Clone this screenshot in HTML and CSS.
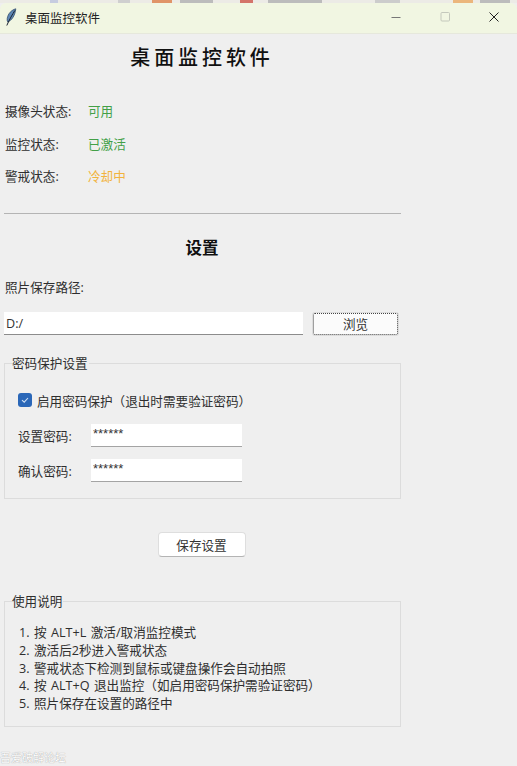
FILE: index.html
```html
<!DOCTYPE html>
<html lang="zh-CN">
<head>
    <meta charset="UTF-8">
    <title>桌面监控软件</title>
    <link rel="stylesheet" href="styles.css">
</head>
<body>
    <!-- Desktop sliver above the window -->
    <div class="desk-strip"></div>

    <div class="window">
        <!-- Title Bar -->
        <div class="titlebar">
            <svg class="feather" width="12" height="19" viewBox="0 0 12 19">
                <path d="M10.8 0.8C6.5 2 3 5.5 2.2 10.5C2 12 2.2 13.2 2.8 14C6.5 12.5 10 8 10.8 0.8Z" fill="#5d86b5" stroke="#26415f" stroke-width="0.7"/>
                <path d="M9.8 2.5C7.5 6.5 4.5 11 1.8 17.5" fill="none" stroke="#1c2430" stroke-width="1"/>
            </svg>
            <span class="titlebar-text">桌面监控软件</span>
            <div class="win-controls">
                <svg width="12" height="12" viewBox="0 0 12 12"><path d="M1.5 6.5H10.5" stroke="#777" stroke-width="1"/></svg>
                <svg width="12" height="12" viewBox="0 0 12 12"><rect x="2" y="1.5" width="8.5" height="8.5" rx="1" fill="none" stroke="#c4c8bc"/></svg>
                <svg width="12" height="12" viewBox="0 0 12 12"><path d="M1.5 1.5L10.5 10.5M10.5 1.5L1.5 10.5" stroke="#222" stroke-width="1"/></svg>
            </div>
        </div>

        <!-- Main Content -->
        <div class="content">
            <h1 class="app-title">桌面监控软件</h1>

            <div class="status-row"><span class="status-label">摄像头状态:</span><span class="green">可用</span></div>
            <div class="status-row"><span class="status-label">监控状态:</span><span class="green">已激活</span></div>
            <div class="status-row"><span class="status-label">警戒状态:</span><span class="orange">冷却中</span></div>

            <hr class="divider">

            <h2 class="section-title">设置</h2>

            <div class="path-label">照片保存路径:</div>
            <div class="path-row">
                <input class="path-input" type="text" value="D:/">
                <button class="browse-btn">浏览</button>
            </div>

            <!-- Password Group -->
            <div class="group group-password">
                <span class="group-title">密码保护设置</span>
                <label class="check-row">
                    <span class="checkbox">
                        <svg width="10" height="10" viewBox="0 0 10 10"><path d="M2 5.2L4.2 7.2L8 3" fill="none" stroke="#cfe0f5" stroke-width="1.1"/></svg>
                    </span>
                    启用密码保护（退出时需要验证密码）
                </label>
                <div class="pass-row">
                    <span class="pass-label">设置密码:</span>
                    <input class="pass-input" type="text" value="******">
                </div>
                <div class="pass-row">
                    <span class="pass-label">确认密码:</span>
                    <input class="pass-input" type="text" value="******">
                </div>
            </div>

            <div class="save-row">
                <button class="save-btn">保存设置</button>
            </div>

            <!-- Usage Group -->
            <div class="group group-usage">
                <span class="group-title">使用说明</span>
                <div>1. 按 ALT+L 激活/取消监控模式</div>
                <div>2. 激活后2秒进入警戒状态</div>
                <div>3. 警戒状态下检测到鼠标或键盘操作会自动拍照</div>
                <div>4. 按 ALT+Q 退出监控（如启用密码保护需验证密码）</div>
                <div>5. 照片保存在设置的路径中</div>
            </div>
        </div>
    </div>

    <div class="watermark">吾爱破解论坛</div>
</body>
</html>
```

FILE: styles.css
```css
/* Global Styling */
html, body {
    margin: 0;
    height: 100%;
}
body {
    font-family: "Open Sans", "Noto Sans CJK SC", sans-serif;
    font-size: 12.6px;
    color: #2e2e2e;
    background-color: #efefef;
    overflow: hidden;
}

.desk-strip {
    height: 3px;
    background: linear-gradient(to right, #ecebe6 0 50px, #c6cce0 50px 58px, #ecebe6 58px 118px, #cfcfcf 118px 130px, #ecebe6 130px 152px, #e09468 152px 172px, #ecebe6 172px 180px, #bcbcbc 180px 213px, #ecebe6 213px 240px, #d4746a 240px 253px, #ecebe6 253px 268px, #bcbcbc 268px 322px, #ecebe6 322px 375px, #cccccc 375px 400px, #ecebe6 400px 453px, #ebb67c 453px 473px, #ecebe6 473px 480px, #bcbcbc 480px 510px, #ecebe6 510px);
}

/* Title Bar */
.titlebar {
    height: 30px;
    box-sizing: border-box;
    display: flex;
    align-items: center;
    padding: 0 0 2px 5px;
    background-color: #f1f6e2;
    border-top-left-radius: 6px;
    border-top-right-radius: 6px;
    box-shadow: 0 1px 0 #e6e8dc;
}
.feather {
    margin-right: 8px;
}
.titlebar-text {
    font-size: 12.5px;
    color: #222;
}
.win-controls {
    margin-left: auto;
    display: flex;
    gap: 37px;
    padding-right: 17px;
}

/* Main Content */
.content {
    width: 398px;
    padding-left: 3px;
}
.app-title {
    margin: 13px 0 33px;
    text-align: center;
    font-size: 20px;
    font-weight: 500;
    line-height: 24px;
    letter-spacing: 3.9px;
    color: #111;
}
.status-row {
    display: flex;
    height: 32.5px;
    padding-left: 2px;
    line-height: 18px;
}
.status-label {
    width: 83px;
}
.green {
    color: #43a047;
}
.orange {
    color: #f2b33d;
}
.divider {
    border: none;
    border-top: 1px solid #b4b4b4;
    margin: 12.5px 0 0 1px;
}
.section-title {
    margin: 22px 0 0;
    text-align: center;
    font-size: 16.5px;
    line-height: 24px;
    color: #111;
}
.path-label {
    margin: 19px 0 0 2px;
    line-height: 18px;
}

/* Inputs */
input {
    font: inherit;
    color: #333;
    border: none;
    border-bottom: 1px solid #8c8c8c;
    background-color: white;
    box-sizing: border-box;
    outline: none;
    padding: 0 2px;
}
.path-row {
    display: flex;
    align-items: center;
    margin-top: 15px;
    padding-left: 1px;
}
.path-input {
    width: 299px;
    height: 23px;
}
.browse-btn {
    width: 85px;
    height: 22px;
    margin-left: 10px;
    padding: 0;
    font: inherit;
    color: #333;
    background-color: #fbfbfb;
    border: 1px dotted #444;
    border-radius: 2px;
    box-shadow: 0 0 0 1px #dcdcdc;
}

/* Groups */
.group {
    position: relative;
    margin-left: 1px;
    border: 1px solid #dcdcdc;
    box-sizing: border-box;
}
.group-title {
    position: absolute;
    top: -9px;
    left: 7px;
    padding-right: 1px;
    line-height: 18px;
    background-color: #efefef;
}
.group-password {
    height: 136px;
    margin-top: 28px;
    padding: 19px 13px 0;
}
.check-row {
    display: flex;
    align-items: center;
    height: 34px;
}
.checkbox {
    display: flex;
    align-items: center;
    justify-content: center;
    width: 14px;
    height: 14px;
    margin-right: 5px;
    background-color: #2a67b8;
    border-radius: 3px;
}
.pass-row {
    display: flex;
    align-items: center;
    height: 23px;
    margin-top: 12px;
}
.check-row + .pass-row {
    margin-top: 7px;
}
.pass-label {
    width: 73px;
}
.pass-input {
    width: 151px;
    height: 23px;
    padding-bottom: 4px;
    font-family: "Liberation Sans", sans-serif;
    font-size: 13px;
    border-bottom-color: #a4a4a4;
}

/* Save Button */
.save-row {
    display: flex;
    justify-content: center;
    margin-top: 33px;
    padding-right: 1px;
}
.save-btn {
    width: 88px;
    height: 25px;
    padding: 0;
    font: inherit;
    color: #333;
    background-color: white;
    border: 1px solid #dedede;
    border-bottom-color: #b4b4b4;
    border-radius: 4px;
}

.group-usage {
    height: 126px;
    margin-top: 44px;
    padding: 22px 14px 0;
    line-height: 17.8px;
    word-spacing: 1.2px;
}

.watermark {
    position: absolute;
    left: 0;
    bottom: 1px;
    font-size: 11px;
    line-height: 14px;
    color: #fdfdfd;
    text-shadow: 0 0 1px #888;
}
```
